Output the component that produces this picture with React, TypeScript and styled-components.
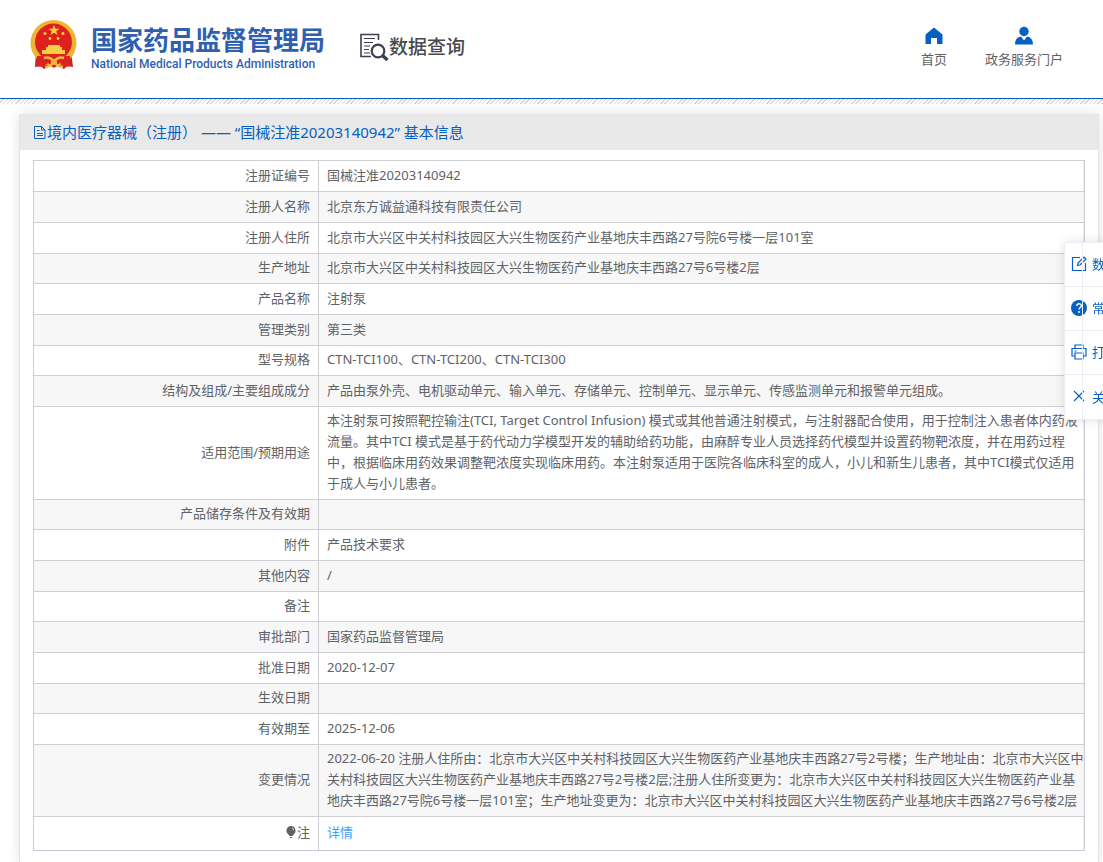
import React from "react";
import styled, { createGlobalStyle } from "styled-components";

const BLUE = "#0560c2";
const LINE = "#cfcfd3";
const SANS = '"Noto Sans", "Noto Sans CJK SC", sans-serif';

const GlobalStyle = createGlobalStyle`
  * { box-sizing: border-box; }
  body {
    margin: 0;
    background: #fff;
    color: #606266;
    font: 13px/21px ${SANS};
    overflow-x: hidden;
  }
  a { text-decoration: none; }
`;

const Page = styled.div`
  min-height: 100vh;
  overflow: hidden;
`;

const Header = styled.header`
  display: flex;
  align-items: flex-start;
  height: 99px;
  padding: 18px 40px 0 29px;
  border-bottom: 1px solid ${BLUE};
`;

const Brand = styled.a`
  display: flex;
  gap: 12px;
  color: #2f5fb0;
`;

const BrandText = styled.div`
  display: flex;
  flex-direction: column;
  padding-top: 4px;
  white-space: nowrap;
`;

const BrandName = styled.strong`
  font: 700 26px/34px "Noto Sans CJK SC", sans-serif;
`;

const BrandEnglish = styled.span`
  font: 500 12px/16px Roboto, sans-serif;
`;

const Query = styled.a`
  display: flex;
  align-items: center;
  margin: 10px 0 0 34px;
  color: #4a4a4e;
  font: 500 19px/36px "Noto Sans CJK SC", sans-serif;
`;

const Nav = styled.nav`
  display: flex;
  gap: 38px;
  margin-left: auto;
  padding-top: 8px;
`;

const NavLink = styled.a`
  display: flex;
  flex-direction: column;
  align-items: center;
  gap: 3px;
  color: #606266;
`;

const Hatch = styled.div`
  height: 5px;
  background: repeating-linear-gradient(135deg, #fff 0 2px, #d4d4d4 2px 3px);
`;

const Card = styled.main`
  margin: 10px 4px 0 19px;
  border: 1px solid #e6e6ea;
  background: #fff;
  box-shadow: 0 0 12px rgba(0, 0, 0, 0.12);
`;

const CardTitle = styled.h1`
  display: flex;
  align-items: center;
  margin: 0;
  height: 35px;
  padding: 0 13px 2px;
  background: #e9e9e9;
  color: ${BLUE};
  font: 400 15px/20px ${SANS};
  white-space: pre;
`;

const CardBody = styled.div`
  padding: 10px 13px 11px 13px;
`;

const Table = styled.table`
  width: 100%;
  table-layout: fixed;
  border-spacing: 0;
  border: 1px solid ${LINE};
  border-bottom-color: #c8c8d6;
`;

const Row = styled.tr<{ $tall?: boolean }>`
  height: ${(p) => (p.$tall ? 33 : 31)}px;
  &:nth-child(3n + 4) { height: ${(p) => (p.$tall ? 33 : 30)}px; }
  &:nth-child(even) { background: #f7f7f8; }
`;

const Label = styled.th`
  width: 285px;
  padding: 3px 8px 5px;
  border-right: 1px solid ${LINE};
  border-bottom: 1px solid ${LINE};
  font-weight: 400;
  text-align: right;
  tr:last-child > & { border-bottom: 0; }
`;

const Value = styled.td`
  padding: 3px 0 5px 8px;
  border-bottom: 1px solid ${LINE};
  box-shadow: inset -1px 0 #ebeef5;
  tr:last-child > & { border-bottom: 0; }
`;

const DetailLink = styled.a`
  color: #409eff;
`;

const Bulb = styled.svg`
  vertical-align: -1px;
`;

const SidePanel = styled.aside`
  position: fixed;
  top: 242px;
  left: calc(100% - 39px);
  width: 120px;
  background: #fff;
  border: 1px solid #ebeef5;
  box-shadow: 0 0 10px rgba(0, 0, 0, 0.12);
`;

const PanelButton = styled.button`
  position: relative;
  display: flex;
  align-items: center;
  gap: 5px;
  width: 100%;
  height: 44px;
  padding: 0 6px;
  border: 0;
  border-bottom: 1px solid #ebeef5;
  background: transparent;
  color: ${BLUE};
  font: 13px/21px ${SANS};
  white-space: nowrap;
  &:last-child { border-bottom: 0; }
  svg { margin-bottom: 2px; }
  &::after {
    content: "";
    position: absolute;
    top: 0;
    bottom: 0;
    left: 17px;
    width: 1px;
    background: #ebeef5;
  }
`;

const Emblem = () => (
  <svg width="50" height="54" viewBox="0 0 50 54" aria-hidden="true">
    <path d="M7 34L6 49l6-1 3 3 6-3 4 1 4-1 6 3 3-3 6 1-2-15z" fill="#cf1d1d" />
    <circle cx="24.500" cy="25" r="23" fill="#edb632" />
    <circle cx="24.500" cy="24" r="18.500" fill="#e0201b" />
    <path d="M25 7l1.500 3.800h4l-3.200 2.400 1.200 3.900-3.500-2.400-3.500 2.400 1.200-3.900-3.200-2.400h4z" fill="#f6cf47" />
    <g fill="#f6cf47">
      <circle cx="16" cy="15.500" r="1.500" /><circle cx="34" cy="15.500" r="1.500" />
      <circle cx="21" cy="20.500" r="1.400" /><circle cx="29" cy="20.500" r="1.400" />
      <path d="M19 27h12v2h2v3h3v4H13v-4h4v-3h2z" />
    </g>
    <path d="M8 38h33l1 10-6 1-5-4-6 5-6-5-5 4-7-1z" fill="#d92420" />
    <path d="M15 40q5-2 10 3 5-5 10-3M16 49q5 0 9-5 4 5 9 5" fill="none" stroke="#f0bd3a" strokeWidth="2.500" />
    <circle cx="25" cy="44" r="3" fill="#edb632" />
  </svg>
);

const QueryIcon = () => (
  <svg width="30" height="30" viewBox="0 0 30 30" fill="none" stroke="#3f3f50" aria-hidden="true">
    <path d="M19.500 9V3.500H2V25.500H12" strokeWidth="1.600" />
    <path d="M5 7.500h11M5 11.500h9M5 15h6M5 18.500h5M5 22h6" strokeWidth="1.200" />
    <circle cx="19" cy="20" r="6.300" strokeWidth="2.200" />
    <path d="M23.500 24.500L28.500 29" strokeWidth="3.400" />
  </svg>
);

const HomeIcon = () => (
  <svg width="20" height="20" viewBox="0 0 20 20" fill={BLUE} aria-hidden="true">
    <path d="M10 1.500L1.500 8.500V18H7v-6h6v6h5.500V8.500z" />
  </svg>
);

const UserIcon = () => (
  <svg width="20" height="20" viewBox="0 0 20 20" fill={BLUE} aria-hidden="true">
    <circle cx="10" cy="5.500" r="4.700" />
    <path d="M1 18.500c0-5 2.500-7.500 6-8l3 4 3-4c3.500.5 6 3 6 8z" />
  </svg>
);

const DocIcon = () => (
  <svg width="14" height="14" viewBox="0 0 14 14" fill="none" stroke={BLUE} aria-hidden="true">
    <path d="M1.500 1.500h7l3.500 3.500v8.500H1.500zM8.500 1.500V5H12M4 5.500h2.500M4 8.500h6M4 10.500h6" />
  </svg>
);

const EditIcon = () => (
  <svg width="16" height="16" viewBox="0 0 16 16" fill="none" stroke={BLUE} strokeWidth="1.200" aria-hidden="true">
    <path d="M9 1.500H1.500V14.500H14.500V7" />
    <path d="M6.500 9.500l.5-2.500 6-6 2 2-6 6z" />
  </svg>
);

const HelpIcon = () => (
  <svg width="16" height="16" viewBox="0 0 16 16" fill="none" aria-hidden="true">
    <circle cx="8" cy="8" r="8" fill={BLUE} />
    <path d="M5.800 6c0-3 4.600-3 4.600-.3C10.400 7.500 8 7.500 8 9.500" stroke="#fff" strokeWidth="1.400" />
    <circle cx="8" cy="12" r="1" fill="#fff" />
  </svg>
);

const PrintIcon = () => (
  <svg width="16" height="16" viewBox="0 0 16 16" fill="none" stroke={BLUE} strokeWidth="1.200" aria-hidden="true">
    <path d="M4 4.500V1h8v3.500M4 12H1V4.500h14V12h-3M4 9h8v6H4zM3.500 7h2" />
  </svg>
);

const CloseIcon = () => (
  <svg width="16" height="16" viewBox="0 0 16 16" fill="none" stroke={BLUE} strokeWidth="1.200" aria-hidden="true">
    <path d="M3 3l10 10M13 3L3 13" />
  </svg>
);

const rows: [string, string][] = [
  ["注册证编号", "国械注准20203140942"],
  ["注册人名称", "北京东方诚益通科技有限责任公司"],
  ["注册人住所", "北京市大兴区中关村科技园区大兴生物医药产业基地庆丰西路27号院6号楼一层101室"],
  ["生产地址", "北京市大兴区中关村科技园区大兴生物医药产业基地庆丰西路27号6号楼2层"],
  ["产品名称", "注射泵"],
  ["管理类别", "第三类"],
  ["型号规格", "CTN-TCI100、CTN-TCI200、CTN-TCI300"],
  ["结构及组成/主要组成成分", "产品由泵外壳、电机驱动单元、输入单元、存储单元、控制单元、显示单元、传感监测单元和报警单元组成。"],
  ["适用范围/预期用途", "本注射泵可按照靶控输注(TCI, Target Control Infusion) 模式或其他普通注射模式，与注射器配合使用，用于控制注入患者体内药液流量。其中TCI 模式是基于药代动力学模型开发的辅助给药功能，由麻醉专业人员选择药代模型并设置药物靶浓度，并在用药过程中，根据临床用药效果调整靶浓度实现临床用药。本注射泵适用于医院各临床科室的成人，小儿和新生儿患者，其中TCI模式仅适用于成人与小儿患者。"],
  ["产品储存条件及有效期", ""],
  ["附件", "产品技术要求"],
  ["其他内容", "/"],
  ["备注", ""],
  ["审批部门", "国家药品监督管理局"],
  ["批准日期", "2020-12-07"],
  ["生效日期", ""],
  ["有效期至", "2025-12-06"],
  ["变更情况", "2022-06-20 注册人住所由：北京市大兴区中关村科技园区大兴生物医药产业基地庆丰西路27号2号楼；生产地址由：北京市大兴区中关村科技园区大兴生物医药产业基地庆丰西路27号2号楼2层;注册人住所变更为：北京市大兴区中关村科技园区大兴生物医药产业基地庆丰西路27号院6号楼一层101室；生产地址变更为：北京市大兴区中关村科技园区大兴生物医药产业基地庆丰西路27号6号楼2层"],
];

export default function App() {
  return (
    <Page>
      <GlobalStyle />
      <Header>
        <Brand href="#">
          <Emblem />
          <BrandText>
            <BrandName>国家药品监督管理局</BrandName>
            <BrandEnglish>National Medical Products Administration</BrandEnglish>
          </BrandText>
        </Brand>
        <Query href="#"><QueryIcon />数据查询</Query>
        <Nav>
          <NavLink href="#"><HomeIcon />首页</NavLink>
          <NavLink href="#"><UserIcon />政务服务门户</NavLink>
        </Nav>
      </Header>
      <Hatch />
      <Card>
        <CardTitle><DocIcon />境内医疗器械（注册） —— “国械注准20203140942” 基本信息</CardTitle>
        <CardBody>
          <Table>
            <tbody>
              {rows.map(([label, value]) => (
                <Row key={label}>
                  <Label scope="row">{label}</Label>
                  <Value>{value}</Value>
                </Row>
              ))}
              <Row $tall>
                <Label scope="row">
                  <Bulb width="12" height="12" viewBox="0 0 12 12" fill="#606266" aria-hidden="true">
                    <path d="M6 0a4.600 4.600 0 0 0-3 8l1.500 2h3L9 8a4.600 4.600 0 0 0-3-8zM5 11h2v1H5z" />
                    <path d="M7 2q1.500.5 1.800 2" stroke="#fff" fill="none" strokeWidth=".8" />
                  </Bulb>
                  注
                </Label>
                <Value><DetailLink href="#">详情</DetailLink></Value>
              </Row>
            </tbody>
          </Table>
        </CardBody>
      </Card>
      <SidePanel>
        <PanelButton type="button"><EditIcon />数据纠错</PanelButton>
        <PanelButton type="button"><HelpIcon />常见问题</PanelButton>
        <PanelButton type="button"><PrintIcon />打印</PanelButton>
        <PanelButton type="button"><CloseIcon />关闭</PanelButton>
      </SidePanel>
    </Page>
  );
}
